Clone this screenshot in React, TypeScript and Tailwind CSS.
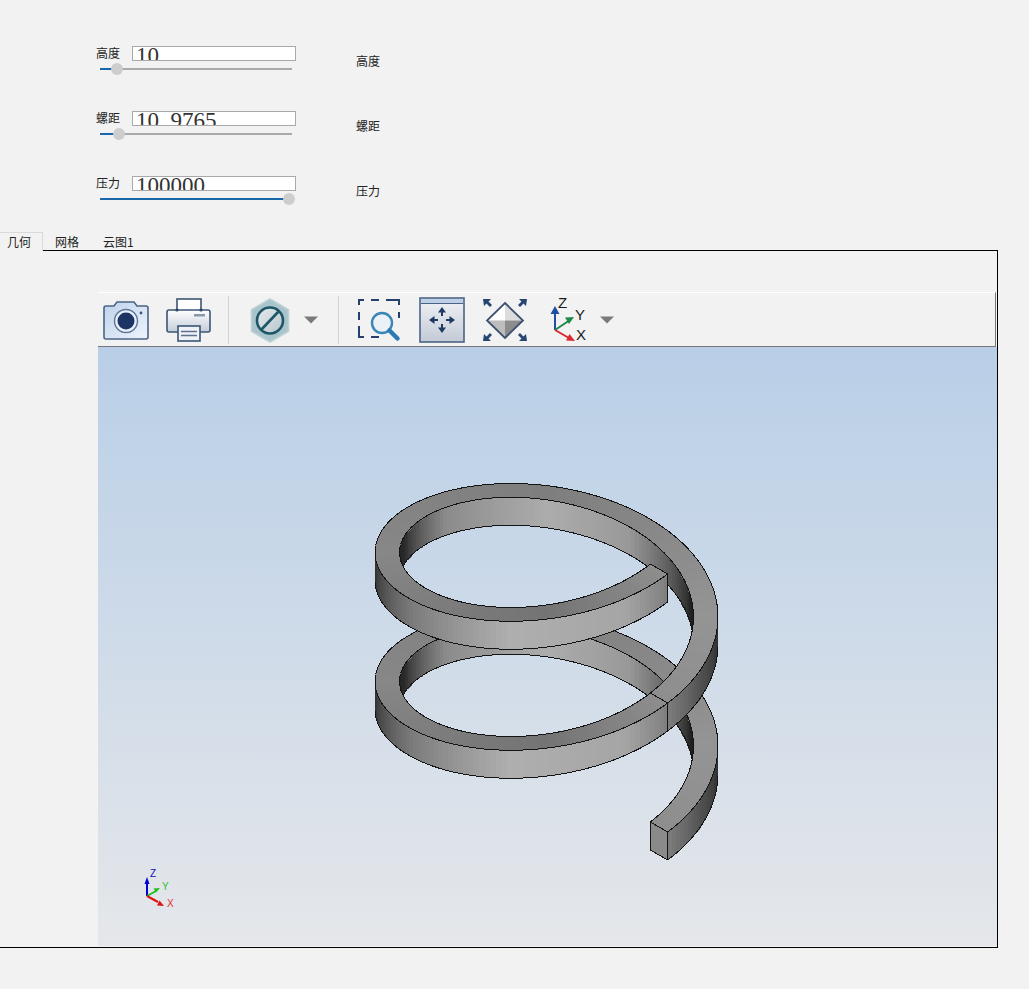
const params = [
  { label: "高度", value: "10", fill: 17 },
  { label: "螺距", value: "10. 9765", fill: 19 },
  { label: "压力", value: "100000", fill: 189 },
];

const tabs = ["几何", "网格", "云图1"];

// brightness by angle, [degrees, grey] pairs
const TOP_SHADE = [[0, 142], [45, 148], [135, 126], [225, 135], [315, 116], [360, 142]];
const OUTER_SHADE = [[0, 125], [19, 80], [45, 40], [225, 40], [263, 122], [303, 175], [342, 165], [360, 125]];
const INNER_SHADE = [[0, 30], [45, 30], [56, 34], [101, 153], [135, 172], [179, 138], [211, 42], [225, 35], [360, 35]];

function shade(table: number[][], deg: number) {
  const a = ((deg % 360) + 360) % 360;
  for (let i = 1; i < table.length; i++) {
    if (a <= table[i][0]) {
      const [a0, v0] = table[i - 1];
      const [a1, v1] = table[i];
      const v = Math.round(v0 + ((v1 - v0) * (a - a0)) / (a1 - a0));
      return `rgb(${v},${v},${v})`;
    }
  }
  return "rgb(128,128,128)";
}

const CX = 546.5;
const CY = 762;
const PITCH = 129;
const WALL = 28;
const R_OUT = 140;
const R_IN = 120;

function pt(r: number, deg: number, drop = 0) {
  const t = (deg * Math.PI) / 180;
  const z = (PITCH * deg) / 360 - drop;
  return [CX + r * 0.866 * (Math.cos(t) + Math.sin(t)), CY + r * 0.5 * (Math.cos(t) - Math.sin(t)) - z];
}

function depth(deg: number, r = 130) {
  const t = (deg * Math.PI) / 180;
  return r * (Math.cos(t) - Math.sin(t)) + (PITCH * deg) / 360;
}

const str = (pts: number[][]) => pts.map((p) => `${p[0].toFixed(1)},${p[1].toFixed(1)}`).join(" ");

function springParts() {
  const items: { d: number; el: React.ReactNode }[] = [];
  const step = 2;
  const face = (key: string, d: number, pts: number[][], fill: string) =>
    items.push({ d, el: <polygon key={key} points={str(pts)} fill={fill} stroke={fill} strokeWidth={0.8} /> });
  const edge = (key: string, d: number, a: number[], b: number[]) =>
    items.push({
      d: d + 20,
      el: <line key={key} x1={a[0]} y1={a[1]} x2={b[0]} y2={b[1]} stroke="#141414" strokeWidth={1} />,
    });

  for (let deg = 0; deg < 720; deg += step) {
    const next = deg + step;
    const mid = deg + step / 2;
    const a = ((mid % 360) + 360) % 360;
    const d = depth(mid);
    const outerVisible = a > 225 || a < 45;
    const innerVisible = a > 45 && a < 225;

    if (outerVisible) {
      face(`o${deg}`, d, [pt(R_OUT, deg), pt(R_OUT, next), pt(R_OUT, next, WALL), pt(R_OUT, deg, WALL)], shade(OUTER_SHADE, mid));
      edge(`ob${deg}`, d, pt(R_OUT, deg, WALL), pt(R_OUT, next, WALL));
    }
    if (innerVisible) {
      face(`i${deg}`, d, [pt(R_IN, deg), pt(R_IN, next), pt(R_IN, next, WALL), pt(R_IN, deg, WALL)], shade(INNER_SHADE, mid));
      edge(`ib${deg}`, d, pt(R_IN, deg, WALL), pt(R_IN, next, WALL));
    }
    face(`t${deg}`, d + 0.1, [pt(R_OUT, deg), pt(R_OUT, next), pt(R_IN, next), pt(R_IN, deg)], shade(TOP_SHADE, mid));
    edge(`et${deg}`, d, pt(R_OUT, deg), pt(R_OUT, next));
    edge(`it${deg}`, d, pt(R_IN, deg), pt(R_IN, next));
  }

  // seams and the two ends
  for (const deg of [0, 360, 720]) {
    const d = depth(deg);
    edge(`sa${deg}`, d, pt(R_OUT, deg), pt(R_IN, deg));
    edge(`sb${deg}`, d, pt(R_OUT, deg), pt(R_OUT, deg, WALL));
  }
  const d0 = depth(0);
  face("cap", d0 + 5, [pt(R_IN, 0), pt(R_OUT, 0), pt(R_OUT, 0, WALL), pt(R_IN, 0, WALL)], "#8a8a8a");
  edge("cap1", d0, pt(R_IN, 0), pt(R_IN, 0, WALL));
  edge("cap2", d0, pt(R_IN, 0, WALL), pt(R_OUT, 0, WALL));

  return items.sort((x, y) => x.d - y.d).map((x) => x.el);
}

function Caret() {
  return (
    <svg width="16" height="8" viewBox="0 0 16 8" className="shrink-0">
      <path d="M1 0.5h14L8 7.5z" fill="#7a7a7a" />
    </svg>
  );
}

function CameraIcon() {
  return (
    <svg width="46" height="46" viewBox="0 0 46 46">
      <defs>
        <linearGradient id="cam" x1="0" y1="0" x2="1" y2="1">
          <stop offset="0" stopColor="#bed2ec" />
          <stop offset="1" stopColor="#eef4fb" />
        </linearGradient>
      </defs>
      <path
        d="M3 9h8l3-4h17l3 4h9a2 2 0 0 1 2 2v29a2 2 0 0 1-2 2H3a2 2 0 0 1-2-2V11a2 2 0 0 1 2-2z"
        fill="url(#cam)"
        stroke="#4a6485"
        strokeWidth="1.6"
      />
      <circle cx="23" cy="24" r="11.5" fill="#e8eff8" stroke="#5a7597" strokeWidth="1.4" />
      <circle cx="23" cy="24" r="8.5" fill="#1c3564" />
      <circle cx="38" cy="16" r="1.4" fill="#39557f" />
    </svg>
  );
}

function PrinterIcon() {
  return (
    <svg width="46" height="46" viewBox="0 0 46 46">
      <defs>
        <linearGradient id="prn" x1="0" y1="0" x2="0" y2="1">
          <stop offset="0" stopColor="#ffffff" />
          <stop offset="1" stopColor="#c3ccd8" />
        </linearGradient>
      </defs>
      <rect x="12" y="2" width="24" height="12" fill="#fff" stroke="#3e5576" strokeWidth="1.6" />
      <rect x="2" y="13" width="43" height="22" rx="2" fill="url(#prn)" stroke="#3e5576" strokeWidth="1.6" />
      <circle cx="12" cy="13" r="1.6" fill="#2c4263" />
      <circle cx="36" cy="13" r="1.6" fill="#2c4263" />
      <rect x="29" y="17" width="11" height="2.5" fill="#8b98aa" />
      <rect x="13" y="29" width="22" height="15" fill="#eef1f5" stroke="#3e5576" strokeWidth="1.6" />
      <path d="M16 34.5h16M16 38.5h16" stroke="#5d7290" strokeWidth="1.5" />
    </svg>
  );
}

function HexIcon() {
  return (
    <svg width="46" height="46" viewBox="0 0 46 46">
      <defs>
        <linearGradient id="disc" x1="0" y1="0" x2="1" y2="1">
          <stop offset="0" stopColor="#e6ebed" />
          <stop offset="1" stopColor="#b7c6cc" />
        </linearGradient>
      </defs>
      <path d="M23 2l18.500 10.700v21.600L23 45 4.500 34.300V12.700z" fill="#a9c4ca" stroke="#bcd2d6" strokeWidth="1.6" />
      <circle cx="23" cy="23.500" r="13" fill="url(#disc)" stroke="#1d5667" strokeWidth="2.6" />
      <path d="M14 33L32 14" stroke="#1d5667" strokeWidth="2.6" />
    </svg>
  );
}

function ZoomBoxIcon() {
  return (
    <svg width="46" height="46" viewBox="0 0 46 46">
      <path
        d="M2 8V3h5M14 3h8M29 3h8M37 3h5v5M42 15v6M2 15v8M2 29v6M2 35v5h5M14 40h8"
        fill="none"
        stroke="#26406c"
        strokeWidth="2"
      />
      <circle cx="25" cy="26" r="10" fill="#eaf2f8" stroke="#3a86b4" strokeWidth="2.400" />
      <path d="M32.500 33.500l8 8" stroke="#2a7bb6" strokeWidth="4.500" strokeLinecap="round" />
    </svg>
  );
}

function FitIcon() {
  return (
    <svg width="46" height="46" viewBox="0 0 46 46">
      <defs>
        <linearGradient id="fit" x1="0" y1="0" x2="0" y2="1">
          <stop offset="0" stopColor="#f0f2f6" />
          <stop offset="1" stopColor="#c3cad6" />
        </linearGradient>
      </defs>
      <rect x="1" y="1" width="44" height="44" fill="url(#fit)" stroke="#4c6385" strokeWidth="1.600" />
      <rect x="2" y="2" width="42" height="4" fill="#bcd0e8" />
      <path d="M2 6.500h42" stroke="#4c6385" />
      <g fill="#1f3b61">
        <path d="M23 10l-4 5.500h3V19h2v-3.500h3z" />
        <path d="M23 36l-4-5.500h3V27h2v3.500h3z" />
        <path d="M10 23l5.500-4v3H19v2h-3.500v3z" />
        <path d="M36 23l-5.500-4v3H27v2h3.500v3z" />
      </g>
    </svg>
  );
}

function DiamondIcon() {
  const arrow = "#26466f";
  return (
    <svg width="46" height="46" viewBox="0 0 46 46">
      <path d="M23 6L5 23.500h18z" fill="#ffffff" />
      <path d="M23 6l18 17.500H23z" fill="#dcdcdc" />
      <path d="M5 23.500L23 41V23.500z" fill="#bdbdbd" />
      <path d="M41 23.500L23 41V23.500z" fill="#8c8c8c" />
      <path d="M23 6l18 17.500L23 41 5 23.500z" fill="none" stroke="#3d5070" strokeWidth="1.800" />
      <g fill={arrow}>
        <path d="M1 2h8L6.500 4.500l3.500 3.500-2 2-3.500-3.500L2 9z" />
        <path d="M45 2h-8l2.500 2.500L36 8l2 2 3.500-3.500L44 9z" />
        <path d="M1 44h8l-2.500-2.500L10 38l-2-2-3.500 3.500L2 37z" />
        <path d="M45 44h-8l2.500-2.500L36 38l2-2 3.500 3.500L44 37z" />
      </g>
    </svg>
  );
}

function TriadIcon() {
  return (
    <svg width="46" height="46" viewBox="0 0 46 46" className="[font-family:'Liberation_Sans',sans-serif]">
      <path d="M9 33V14" stroke="#1f4f9f" strokeWidth="2" />
      <path d="M9 9l-4.500 8h9z" fill="#1f4f9f" />
      <path d="M9 33l15-10" stroke="#1e8a4a" strokeWidth="2" />
      <path d="M28 20l-9 .6 4 6.400z" fill="#1e8a4a" />
      <path d="M9 33l14 8" stroke="#d9282e" strokeWidth="2" />
      <path d="M29 44l-9-.5 3.500-6.500z" fill="#d9282e" />
      <text x="12" y="11" fontSize="15" fill="#1a1a1a">Z</text>
      <text x="29" y="23" fontSize="15" fill="#1a1a1a">Y</text>
      <text x="30" y="43" fontSize="15" fill="#1a1a1a">X</text>
    </svg>
  );
}

function Separator() {
  return <div className="h-[48px] w-px shrink-0 bg-[#d4d4d4]" />;
}

function Toolbar() {
  return (
    <div className="mr-[1px] flex h-[55px] items-center border-t border-r border-b border-t-white border-r-[#777] border-b-[#777] pl-[5px]">
      <CameraIcon />
      <div className="ml-[16px]">
        <PrinterIcon />
      </div>
      <div className="ml-[17px]">
        <Separator />
      </div>
      <div className="ml-[18px]">
        <HexIcon />
      </div>
      <div className="ml-[10px]">
        <Caret />
      </div>
      <div className="ml-[19px]">
        <Separator />
      </div>
      <div className="ml-[18px]">
        <ZoomBoxIcon />
      </div>
      <div className="ml-[16px]">
        <FitIcon />
      </div>
      <div className="ml-[17px]">
        <DiamondIcon />
      </div>
      <div className="ml-[18px]">
        <TriadIcon />
      </div>
      <div className="ml-[7px]">
        <Caret />
      </div>
    </div>
  );
}

function Viewport() {
  return (
    <div className="h-[599px] bg-gradient-to-b from-[#b9cfe7] to-[#e5e7ea]">
      <svg viewBox="98 347 899 599" className="block h-full w-full">
        <g shapeRendering="crispEdges">{springParts()}</g>
        {/* small axis triad */}
        <g className="[font-family:'Liberation_Sans',sans-serif]" fontSize="10">
          <path d="M147 896v-14" stroke="#0000d8" strokeWidth="2" />
          <path d="M147 877l-2.500 7h5z" fill="#0000d8" />
          <path d="M147 896l9-5" stroke="#20c020" strokeWidth="2" />
          <path d="M160 888l-6.500.5 2.500 4z" fill="#20c020" />
          <path d="M147 896l11 6" stroke="#e01010" strokeWidth="2" />
          <path d="M164 906l-7-.5 2.500-5z" fill="#e01010" />
          <text x="150" y="877" fill="#1010c0">Z</text>
          <text x="162" y="890" fill="#30c030">Y</text>
          <text x="167" y="907" fill="#e03030">X</text>
        </g>
      </svg>
    </div>
  );
}

export default function App() {
  return (
    <div className="h-[989px] w-[1029px] overflow-hidden bg-[#f2f2f2] pt-[46px] text-[12px] text-[#222] [font-family:'Noto_Sans_CJK_SC',sans-serif]">
      {/* PARAMETERS */}
      <div className="flex flex-col gap-[41px] pl-[96px]">
        {params.map((p) => (
          <div key={p.label} className="flex h-[24px]">
            <div className="w-[200px]">
              <div className="flex h-[15px] items-center gap-[12px]">
                <span className="-mt-[2px] w-[24px] shrink-0 leading-[15px]">{p.label}</span>
                <div className="h-[15px] flex-1 overflow-hidden border border-[#a9a9a9] bg-white pl-[3px] text-[23px] leading-[18px] text-[#333] [font-family:'Liberation_Serif',serif]">
                  {p.value}
                </div>
              </div>
              <div className="relative ml-[4px] mt-[7px] h-[2px] w-[192px] bg-[#aaaaaa]">
                <div className="h-full bg-[#1a66aa]" style={{ width: p.fill }} />
                <div
                  className="absolute top-[-5px] h-[12px] w-[12px] rounded-full bg-[#cdcdcd]"
                  style={{ left: p.fill - 6 }}
                />
              </div>
            </div>
            <span className="ml-[60px] mt-[7px] leading-[15px]">{p.label}</span>
          </div>
        ))}
      </div>

      {/* TABS */}
      <div className="mt-[32px] flex h-[18px] text-[12px]">
        {tabs.map((t, i) => (
          <div
            key={t}
            className={
              i === 0
                ? "relative z-10 h-[19px] w-[43px] border-t border-r border-[#d9d9d9] bg-[#f2f2f2] pl-[7px] leading-[18px]"
                : "w-[48px] pl-[12px] leading-[20px] whitespace-nowrap"
            }
          >
            {t}
          </div>
        ))}
      </div>

      {/* PANEL */}
      <div className="h-[698px] w-[998px] border-t border-r border-b border-black pl-[98px] pt-[41px]">
        <Toolbar />
        <Viewport />
      </div>
    </div>
  );
}
